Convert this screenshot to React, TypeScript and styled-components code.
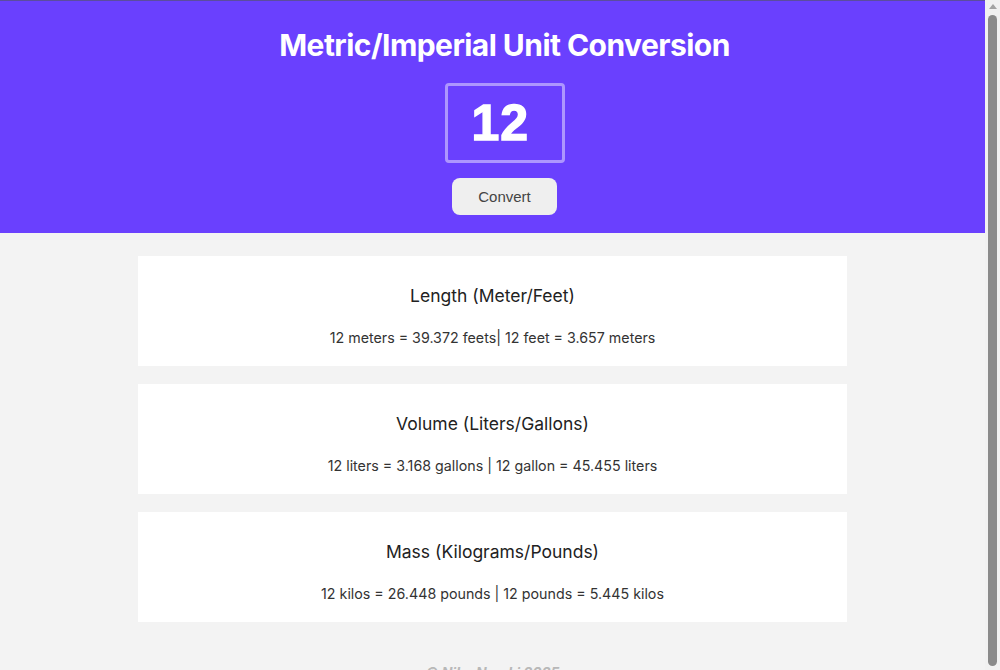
import React, { useState } from "react";
import styled, { createGlobalStyle } from "styled-components";

const GlobalStyle = createGlobalStyle`
  html, body {
    margin: 0;
    padding: 0;
    background: #f3f3f3;
    font-family: Inter, "Noto Sans", sans-serif;
  }
  * { box-sizing: border-box; }
`;

const Page = styled.div`
  padding-right: 15px;
  background: #f3f3f3;
`;

const ScrollRail = styled.div`
  position: fixed;
  top: 0;
  right: 0;
  width: 15px;
  height: 100vh;
  background: #f1f1f1;
  display: flex;
  flex-direction: column;
  align-items: center;
  padding: 4px 0 4px;
`;

const ScrollArrow = styled.div`
  width: 0;
  height: 0;
  border-left: 4px solid transparent;
  border-right: 4px solid transparent;
  border-bottom: 5px solid #a3a3a3;
`;

const ScrollThumb = styled.div`
  margin-top: 6px;
  width: 9px;
  flex: 1;
  border-radius: 5px;
  background: #8a8a8a;
`;

const Header = styled.header`
  background: #6a40fe;
  border-top: 1px solid #5b4d9e;
  display: flex;
  flex-direction: column;
  align-items: center;
  padding: 26px 0 18px 24px;
`;

const Title = styled.h1`
  margin: 0;
  color: #ffffff;
  font-family: Inter, sans-serif;
  font-weight: 700;
  font-size: 30px;
  line-height: 36px;
  letter-spacing: -0.55px;
`;

const NumberInput = styled.input`
  margin-top: 20px;
  width: 120px;
  height: 80px;
  background: transparent;
  border: 3px solid rgba(255, 255, 255, 0.45);
  border-radius: 4px;
  color: #ffffff;
  font-family: "Liberation Sans", Arial, sans-serif;
  font-weight: 700;
  font-size: 50px;
  -webkit-text-stroke: 1.4px #ffffff;
  letter-spacing: 1px;
  padding: 0 0 0 24px;
  outline: none;
`;

const ConvertButton = styled.button`
  margin-top: 15px;
  width: 105px;
  height: 37px;
  border: none;
  border-radius: 8px;
  background: #efefef;
  color: #444444;
  font-family: "Liberation Sans", Arial, sans-serif;
  font-size: 15px;
  cursor: pointer;
`;

const Main = styled.main`
  display: flex;
  flex-direction: column;
  align-items: center;
  gap: 18px;
  padding-top: 23px;
`;

const Card = styled.section`
  width: 72%;
  background: #ffffff;
  display: flex;
  flex-direction: column;
  align-items: center;
  padding: 28px 0 18px;
`;

const CardTitle = styled.h2`
  margin: 0 0 20px;
  font-family: Inter, sans-serif;
  font-weight: 400;
  font-size: 17.5px;
  line-height: 24px;
  color: #222222;
`;

const Result = styled.p`
  margin: 0;
  font-family: Inter, sans-serif;
  font-size: 14.25px;
  line-height: 20px;
  color: #333333;
`;

const Footer = styled.footer`
  text-align: center;
  padding: 41px 0 10px;
  font-family: Inter, sans-serif;
  font-weight: 700;
  font-style: italic;
  font-size: 14px;
  line-height: 20px;
  color: #b8b8b8;
`;

export default function App() {
  const [value, setValue] = useState("12");
  const n = parseFloat(value) || 0;
  const f = (x: number) => x.toFixed(3);
  return (
    <Page>
      <GlobalStyle />
      <Header>
        <Title>Metric/Imperial Unit Conversion</Title>
        <NumberInput
          type="text"
          value={value}
          onChange={(e) => setValue(e.target.value)}
        />
        <ConvertButton>Convert</ConvertButton>
      </Header>
      <Main>
        <Card>
          <CardTitle>Length (Meter/Feet)</CardTitle>
          <Result>
            {n} meters = {f(n * 3.281)} feets| {n} feet = {f(n / 3.281)} meters
          </Result>
        </Card>
        <Card>
          <CardTitle>Volume (Liters/Gallons)</CardTitle>
          <Result>
            {n} liters = {f(n * 0.264)} gallons | {n} gallon = {f(n / 0.264)} liters
          </Result>
        </Card>
        <Card>
          <CardTitle>Mass (Kilograms/Pounds)</CardTitle>
          <Result>
            {n} kilos = {f(n * 2.204)} pounds | {n} pounds = {f(n / 2.204)} kilos
          </Result>
        </Card>
      </Main>
      <Footer>© Niko Nmaki 2025</Footer>
      <ScrollRail aria-hidden="true">
        <ScrollArrow />
        <ScrollThumb />
      </ScrollRail>
    </Page>
  );
}
